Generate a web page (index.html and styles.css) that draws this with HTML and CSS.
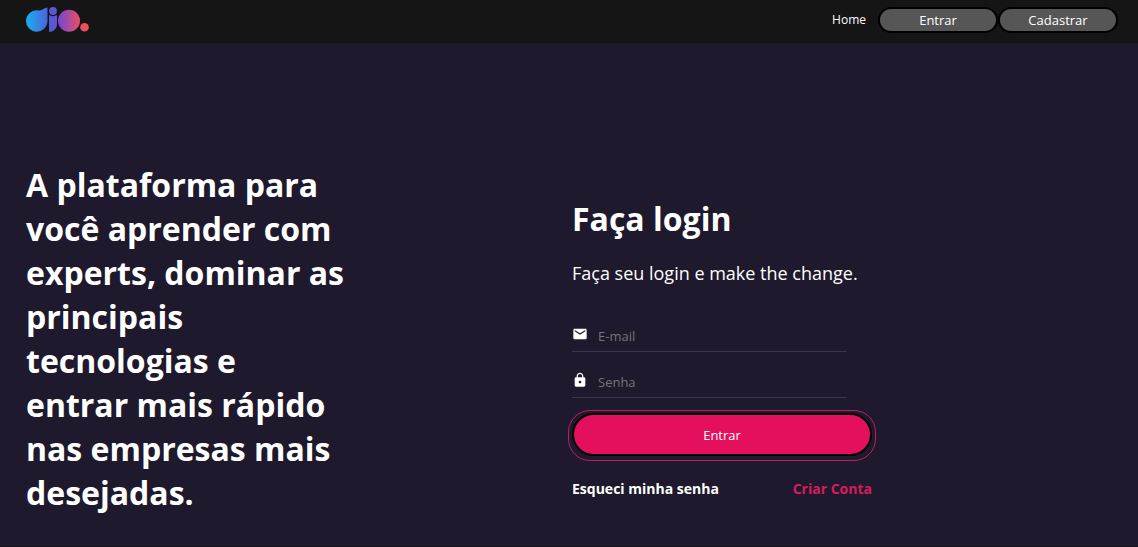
FILE: index.html
```
<!DOCTYPE html>
<html lang="pt-BR">
<head>
<meta charset="utf-8">
<meta name="viewport" content="width=device-width, initial-scale=1">
<title>DIO - Login</title>
<link rel="stylesheet" href="styles.css">
</head>
<body>
<header class="header">
  <a class="logo" href="#" aria-label="dio.">
    <svg width="64" height="26" viewBox="0 0 64 26" aria-hidden="true">
      <defs>
        <linearGradient id="brand" gradientUnits="userSpaceOnUse" x1="0" y1="14" x2="64" y2="14">
          <stop offset="0" stop-color="#18b0f0"/>
          <stop offset=".38" stop-color="#4f5bd8"/>
          <stop offset=".55" stop-color="#8048c8"/>
          <stop offset=".8" stop-color="#dc4d72"/>
          <stop offset="1" stop-color="#fa5050"/>
        </linearGradient>
      </defs>
      <g fill="url(#brand)">
        <path d="M21.500 .5V14A10.700 10.700 0 1 1 13 3.600C17 3.500 18 .5 21.500 .5Z"/>
        <circle cx="27" cy="4" r="3.900"/>
        <path d="M23 8C25.500 9.500 28.500 9.500 31 8V17C31 21.500 28 24.800 23 24.800Z"/>
        <circle cx="43" cy="13.700" r="11"/>
        <circle cx="58.500" cy="20.300" r="4.300"/>
      </g>
    </svg>
  </a>
  <nav class="nav">
    <a class="nav-link" href="#">Home</a>
    <div class="nav-actions">
      <button class="nav-button" type="button">Entrar</button>
      <button class="nav-button" type="button">Cadastrar</button>
    </div>
  </nav>
</header>
<main class="main">
  <section class="column">
    <h1 class="headline">A plataforma para você aprender com experts, dominar as principais tecnologias e entrar mais rápido nas empresas mais desejadas.</h1>
  </section>
  <section class="column">
    <form class="login">
      <h2 class="login-title">Faça login</h2>
      <p class="login-text">Faça seu login e make the change.</p>
      <div class="field">
        <label class="field-icon" for="email" aria-label="E-mail">
          <svg width="16" height="16" viewBox="0 0 24 24" aria-hidden="true"><path fill="currentColor" d="M20 4H4c-1.100 0-1.990.9-1.990 2L2 18c0 1.100.9 2 2 2h16c1.100 0 2-.9 2-2V6c0-1.100-.9-2-2-2zm0 4l-8 5-8-5V6l8 5 8-5v2z"/></svg>
        </label>
        <input class="field-input" id="email" type="email" placeholder="E-mail">
      </div>
      <div class="field">
        <label class="field-icon" for="password" aria-label="Senha">
          <svg width="16" height="16" viewBox="0 0 24 24" aria-hidden="true"><path fill="currentColor" d="M18 8h-1V6c0-2.760-2.240-5-5-5S7 3.240 7 6v2H6c-1.100 0-2 .9-2 2v10c0 1.100.9 2 2 2h12c1.100 0 2-.9 2-2V10c0-1.100-.9-2-2-2zm-6 9c-1.100 0-2-.9-2-2s.9-2 2-2 2 .9 2 2-.9 2-2 2zm3.100-9H8.900V6c0-1.710 1.390-3.100 3.100-3.100 1.710 0 3.100 1.390 3.100 3.100v2z"/></svg>
        </label>
        <input class="field-input" id="password" type="password" placeholder="Senha">
      </div>
      <button class="submit" type="button">Entrar</button>
      <div class="links">
        <a class="link" href="#">Esqueci minha senha</a>
        <a class="link link-accent" href="#">Criar Conta</a>
      </div>
    </form>
  </section>
</main>
</body>
</html>
```
FILE: styles.css
```
* {
  box-sizing: border-box;
  margin: 0;
  padding: 0;
}

body {
  min-height: 100vh;
  background: #1e192c;
  color: #fff;
  font-family: "Open Sans", sans-serif;
  border-bottom: 1px solid #15111e;
}

.header {
  display: flex;
  align-items: flex-start;
  justify-content: space-between;
  padding: 7px 20px 10px 26px;
  background: #151515;
}

.logo,
.logo svg {
  display: block;
}

.nav,
.nav-actions {
  display: flex;
  align-items: center;
}

.nav {
  gap: 12px;
}

.nav-link {
  color: #fff;
  font-size: 12px;
  line-height: 26px;
  text-decoration: none;
}

.nav-button {
  width: 120px;
  height: 26px;
  border: 2px solid #000;
  border-radius: 22px;
  background: #565656;
  color: #fff;
  font-family: inherit;
  font-size: 13px;
}

.main {
  display: grid;
  grid-template-columns: 1fr 1fr;
  align-items: start;
  padding: 120px 20px 30px 26px;
}

.headline {
  max-width: 320px;
  font-size: 32px;
  line-height: 44px;
}

.login {
  width: 300px;
  padding-top: 34px;
}

.login-title {
  margin-bottom: 20px;
  font-size: 32px;
  line-height: 44px;
}

.login-text {
  margin-bottom: 36px;
  font-size: 18px;
  line-height: 24px;
}

.field {
  display: flex;
  width: 275px;
  height: 31px;
  margin-bottom: 15px;
  border-bottom: 1px solid #3b3450;
}

.field-icon {
  width: 26px;
  padding-top: 5px;
}

.field-icon svg {
  display: block;
}

.field-input {
  flex: 1;
  min-width: 0;
  border: 0;
  outline: 0;
  background: transparent;
  color: #fff;
  font-family: inherit;
  font-size: 13px;
}

.field-input::placeholder {
  color: #757575;
}

.submit {
  position: relative;
  display: block;
  width: 100%;
  height: 43px;
  border: 2px solid #000;
  border-radius: 22px;
  background: #e4105d;
  color: #fff;
  font-family: inherit;
  font-size: 13px;
}

.submit::after {
  content: "";
  position: absolute;
  inset: -5px -6px -7px;
  border: 1px solid #c01c63;
  border-radius: 22px;
}

.links {
  display: flex;
  justify-content: space-between;
  margin-top: 23px;
}

.link {
  color: #fff;
  font-size: 14px;
  font-weight: 700;
  line-height: 20px;
  text-decoration: none;
}

.link-accent {
  color: #d81b60;
}
```
